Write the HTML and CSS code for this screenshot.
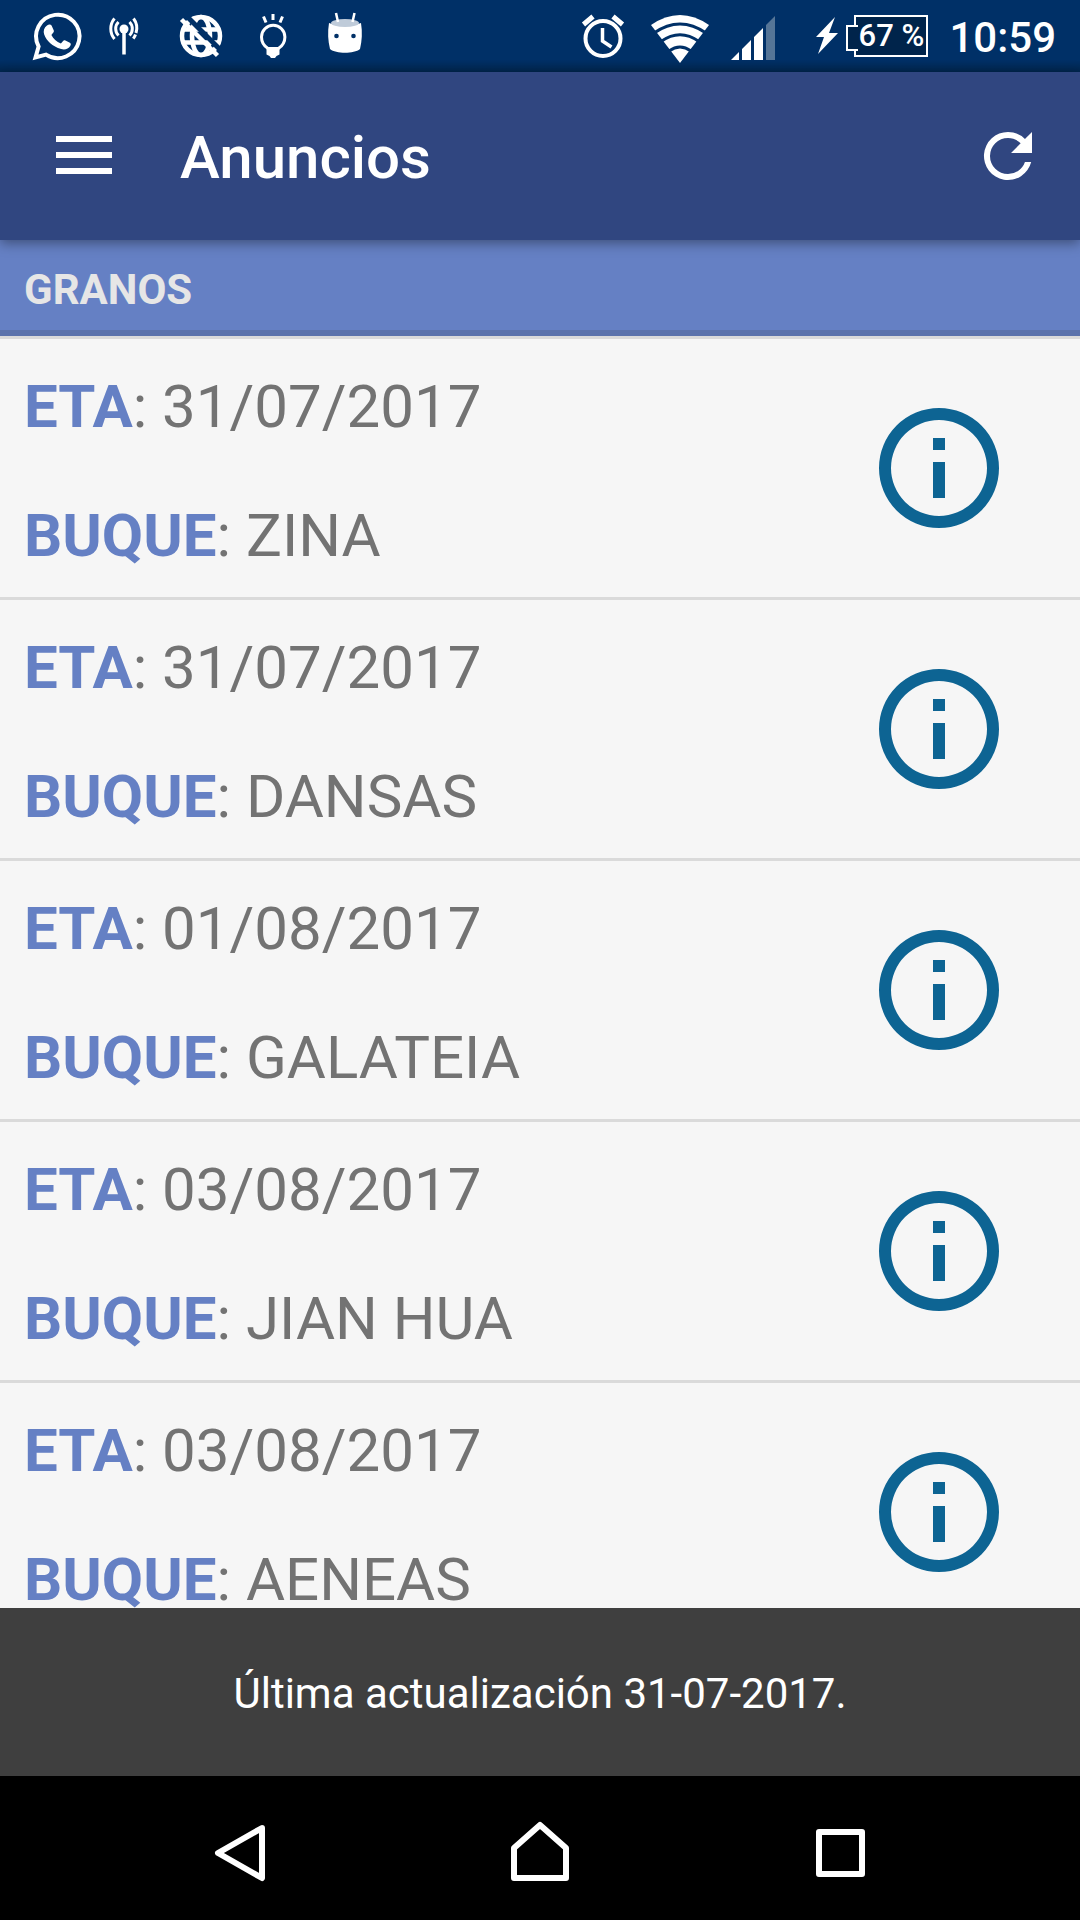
FILE: index.html
```html
<!DOCTYPE html>
<html lang="es">
<head>
<meta charset="utf-8">
<meta name="viewport" content="width=device-width, initial-scale=1">
<title>Anuncios</title>
<link rel="stylesheet" href="styles.css">
</head>
<body>
<div class="screen">
  <div class="status-bar">
    <div class="notifications">
      <svg class="notification" viewBox="0 0 72 72" aria-hidden="true">
        <path d="M14.500 57.500 17.600 46.500A21.700 21.700 0 1 1 25 54.600Z" fill="none" stroke="#fff" stroke-width="4" stroke-linejoin="miter"/>
        <path d="M26 25.500c2-1.500 4-1.200 4.800.5l2 4.600c.4 1.200-.2 2-2.400 4.400 2 4 5 6.800 9.500 8.600 2-2.600 2.700-3.800 4-3.300l5 2.500c1.300.8 1 2 .3 3.300-1.700 3-5.500 4-9 3-9-2.500-14.500-8-17-14.500-1.200-3.500-.2-7 2.800-9.100Z" fill="#fff"/>
      </svg>
      <svg class="notification" viewBox="0 0 72 72" aria-hidden="true">
        <circle cx="31" cy="29" r="4.500" fill="#fff"/>
        <path d="M31 29V54.500" stroke="#fff" stroke-width="3.500"/>
        <path d="M25.500 22a9.500 9.500 0 0 0 0 13.500M36.500 22a9.500 9.500 0 0 1 0 13.500M21.500 18.500a16 16 0 0 0 0 20.500M40.500 18.500a16 16 0 0 1 2.500 14.500M42.500 34.500a16 16 0 0 1-2.200 4.200" fill="none" stroke="#fff" stroke-width="3"/>
      </svg>
      <svg class="notification" viewBox="0 0 72 72" aria-hidden="true">
        <g fill="none" stroke="#fff" stroke-width="4.500">
          <circle cx="36" cy="36" r="19"/>
          <ellipse cx="36" cy="36" rx="9" ry="19"/>
          <path d="M17 29.500H55M17 42.500H55"/>
        </g>
        <path d="M20 14.500 58 52.500" stroke="#003067" stroke-width="5"/>
        <path d="M16.500 19.500 52.500 55.500" stroke="#fff" stroke-width="4.500"/>
      </svg>
      <svg class="notification" viewBox="0 0 72 72" aria-hidden="true">
        <path d="M31 48.500C27 46 24.500 42 24.500 37a11.700 11.700 0 0 1 23.400 0c0 5-2.500 9-6.500 11.500Z" fill="none" stroke="#fff" stroke-width="3"/>
        <path d="M29.500 48h13v6.500l-3 1.500-1.500 2h-4l-1.500-2-3-1.500Z" fill="#fff"/>
        <path d="M36 14v6M26.500 16.500l2.500 6M45.500 16.500l-2.500 6" stroke="#fff" stroke-width="3"/>
      </svg>
      <svg class="notification" viewBox="0 0 72 72" aria-hidden="true">
        <path d="M20 23c10 4 22 4 32 0 1.500 9 1 18-1 26-6 5-24 5-30 0-2-8-2.500-17-1-26Z" fill="#fff"/>
        <ellipse cx="36" cy="23" rx="14" ry="4" fill="#bfcbd9"/>
        <path d="M27 13l2 9M45.500 13l-2 9" stroke="#fff" stroke-width="2.500"/>
        <circle cx="27.500" cy="36" r="2.300" fill="#003067"/>
        <circle cx="44.500" cy="36" r="2.300" fill="#003067"/>
      </svg>
    </div>
    <div class="indicators">
      <svg class="indicator-alarm" viewBox="0 0 44 48" aria-hidden="true">
        <g fill="none" stroke="#fff">
          <circle cx="22" cy="26.500" r="17.500" stroke-width="4"/>
          <path d="M21.500 16v13l9 6" stroke-width="3.500"/>
          <path d="M2.500 12.500 12 4.500M41.500 12.500 32 4.500" stroke-width="5"/>
        </g>
      </svg>
      <svg class="indicator-wifi" viewBox="0 0 58 48" aria-hidden="true">
        <path d="M0 13Q29-7 58 13L29 51Z" fill="#fff"/>
        <path d="M3 21Q29 3 55 21M10 29.500Q29 16 48 29.500M18 39Q29 31 40 39" fill="none" stroke="#003067" stroke-width="3"/>
      </svg>
      <svg class="indicator-signal" viewBox="0 0 44 48" aria-hidden="true">
        <path d="M0 48 8 40V48ZM11 48V37l9-9v20ZM23 48V25l9-9v32Z" fill="#fff"/>
        <path d="M35 48V13l9-9v44Z" fill="#557597"/>
      </svg>
      <svg class="indicator-charge" viewBox="0 0 24 48" aria-hidden="true">
        <path d="M20 5 1 25h8L3 42 23 21H14Z" fill="#fff"/>
      </svg>
      <span class="battery">67 %</span>
      <time class="clock">10:59</time>
    </div>
  </div>

  <header class="app-bar">
    <button class="icon-button" type="button" aria-label="Menú">
      <svg class="menu-icon" viewBox="0 0 56 40" aria-hidden="true"><path d="M0 3H56M0 19H56M0 35H56" stroke="#fff" stroke-width="6"/></svg>
    </button>
    <h1 class="title">Anuncios</h1>
    <button class="icon-button" type="button" aria-label="Actualizar">
      <svg class="refresh-icon" viewBox="0 0 24 24" aria-hidden="true"><path d="M17.650 6.350A7.958 7.958 0 0 0 12 4a8 8 0 1 0 7.730 10h-2.080A5.990 5.990 0 0 1 12 18a6 6 0 1 1 0-12c1.660 0 3.140.69 4.220 1.780L13 11h7V4l-2.350 2.350Z" fill="#fff"/></svg>
    </button>
  </header>

  <main class="content">
    <h2 class="section-title">GRANOS</h2>
    <ul class="list">
      <li class="row">
        <div class="details"><p class="field"><b class="label">ETA</b>: 31/07/2017</p><p class="field"><b class="label">BUQUE</b>: ZINA</p></div>
        <button class="icon-button" type="button" aria-label="Información de ZINA"><svg class="info-icon" viewBox="0 0 24 24" aria-hidden="true"><path d="M11 7h2v2h-2zm0 4h2v6h-2zm1-9a10 10 0 1 0 0 20 10 10 0 0 0 0-20zm0 18a8 8 0 1 1 0-16 8 8 0 0 1 0 16z"/></svg></button>
      </li>
      <li class="row">
        <div class="details"><p class="field"><b class="label">ETA</b>: 31/07/2017</p><p class="field"><b class="label">BUQUE</b>: DANSAS</p></div>
        <button class="icon-button" type="button" aria-label="Información de DANSAS"><svg class="info-icon" viewBox="0 0 24 24" aria-hidden="true"><path d="M11 7h2v2h-2zm0 4h2v6h-2zm1-9a10 10 0 1 0 0 20 10 10 0 0 0 0-20zm0 18a8 8 0 1 1 0-16 8 8 0 0 1 0 16z"/></svg></button>
      </li>
      <li class="row">
        <div class="details"><p class="field"><b class="label">ETA</b>: 01/08/2017</p><p class="field"><b class="label">BUQUE</b>: GALATEIA</p></div>
        <button class="icon-button" type="button" aria-label="Información de GALATEIA"><svg class="info-icon" viewBox="0 0 24 24" aria-hidden="true"><path d="M11 7h2v2h-2zm0 4h2v6h-2zm1-9a10 10 0 1 0 0 20 10 10 0 0 0 0-20zm0 18a8 8 0 1 1 0-16 8 8 0 0 1 0 16z"/></svg></button>
      </li>
      <li class="row">
        <div class="details"><p class="field"><b class="label">ETA</b>: 03/08/2017</p><p class="field"><b class="label">BUQUE</b>: JIAN HUA</p></div>
        <button class="icon-button" type="button" aria-label="Información de JIAN HUA"><svg class="info-icon" viewBox="0 0 24 24" aria-hidden="true"><path d="M11 7h2v2h-2zm0 4h2v6h-2zm1-9a10 10 0 1 0 0 20 10 10 0 0 0 0-20zm0 18a8 8 0 1 1 0-16 8 8 0 0 1 0 16z"/></svg></button>
      </li>
      <li class="row">
        <div class="details"><p class="field"><b class="label">ETA</b>: 03/08/2017</p><p class="field"><b class="label">BUQUE</b>: AENEAS</p></div>
        <button class="icon-button" type="button" aria-label="Información de AENEAS"><svg class="info-icon" viewBox="0 0 24 24" aria-hidden="true"><path d="M11 7h2v2h-2zm0 4h2v6h-2zm1-9a10 10 0 1 0 0 20 10 10 0 0 0 0-20zm0 18a8 8 0 1 1 0-16 8 8 0 0 1 0 16z"/></svg></button>
      </li>
    </ul>
  </main>

  <div class="toast" role="status">Última actualización 31-07-2017.</div>

  <nav class="nav-bar">
    <button class="nav-button" type="button" aria-label="Atrás">
      <svg class="nav-icon" viewBox="0 0 60 60" aria-hidden="true"><path d="M52 5 8 30 52 55Z"/></svg>
    </button>
    <button class="nav-button" type="button" aria-label="Inicio">
      <svg class="nav-icon" viewBox="0 0 60 60" aria-hidden="true"><path d="M4 25 30 2 56 25V55H4Z"/></svg>
    </button>
    <button class="nav-button" type="button" aria-label="Recientes">
      <svg class="nav-icon" viewBox="0 0 60 60" aria-hidden="true"><path d="M9 9H52V51H9Z"/></svg>
    </button>
  </nav>
</div>
</body>
</html>
```
FILE: styles.css
```css
* {
  box-sizing: border-box;
}

body {
  margin: 0;
  font-family: Roboto, "Liberation Sans", sans-serif;
  background: #f6f6f6;
}

h1, h2, p, ul {
  margin: 0;
  padding: 0;
}

svg {
  display: block;
  flex: none;
  overflow: visible;
}

button {
  margin: 0;
  padding: 0;
  border: 0;
  background: none;
  cursor: pointer;
}

.screen {
  display: flex;
  flex-direction: column;
  height: 100vh;
}

/* System status bar */
.status-bar {
  flex: none;
  display: flex;
  justify-content: space-between;
  height: 72px;
  padding: 0 24px 0 21px;
  color: #fff;
  background: linear-gradient(#003067 60px, #00264f);
}

.notifications,
.indicators {
  display: flex;
  align-items: center;
}

.notification {
  width: 72px;
  height: 72px;
}

.indicator-alarm {
  width: 44px;
  height: 48px;
  margin-right: 26px;
}

.indicator-wifi {
  width: 58px;
  height: 48px;
  margin-right: 22px;
}

.indicator-signal {
  width: 44px;
  height: 48px;
  margin-right: 40px;
}

.indicator-charge {
  width: 24px;
  height: 48px;
  margin-right: 15px;
}

.battery {
  position: relative;
  width: 74px;
  height: 42px;
  margin-right: 21px;
  border: 2px solid #fff;
  background: #00244b;
  font-size: 31px;
  font-weight: 500;
  line-height: 38px;
  text-align: center;
  white-space: nowrap;
}

.battery::before {
  content: "";
  position: absolute;
  top: 8px;
  left: -10px;
  width: 10px;
  height: 22px;
  border: 2px solid #fff;
  border-right: 0;
  background: #00244b;
}

.clock {
  padding-top: 3px;
  font-size: 42px;
  font-weight: 500;
  line-height: 48px;
}

/* App bar */
.app-bar {
  position: relative;
  z-index: 1;
  flex: none;
  display: flex;
  align-items: center;
  height: 168px;
  padding: 0 36px 0 56px;
  color: #fff;
  background: #304680;
  box-shadow: 0 3px 12px rgba(0, 0, 0, 0.4);
}

.menu-icon {
  width: 56px;
  height: 40px;
}

.refresh-icon {
  width: 72px;
  height: 72px;
}

.title {
  flex: 1;
  padding: 4px 0 0 68px;
  font-size: 60px;
  font-weight: 500;
  line-height: 72px;
}

/* Announcements */
.content {
  flex: 1;
  min-height: 0;
  overflow: hidden;
}

.section-title {
  padding: 26px 24px 16px;
  border-bottom: 6px solid #5b72ac;
  color: #e6e6e6;
  background: #6580c4;
  font-size: 42px;
  font-weight: 700;
  line-height: 48px;
}

.list {
  list-style: none;
}

.row {
  display: flex;
  align-items: center;
  justify-content: space-between;
  padding: 0 69px 0 24px;
  border-top: 3px solid #dadada;
}

.details {
  display: flex;
  flex-direction: column;
  gap: 57px;
  padding: 32px 0 25px;
}

.field {
  color: #737373;
  font-size: 60px;
  line-height: 72px;
}

.label {
  color: #6580c4;
  font-weight: 700;
}

.info-icon {
  width: 144px;
  height: 144px;
  fill: #0d6493;
}

/* Update message */
.toast {
  flex: none;
  padding: 62px 24px 58px;
  color: #fff;
  background: #3f3f3f;
  font-size: 42px;
  line-height: 48px;
  text-align: center;
}

/* System navigation */
.nav-bar {
  flex: none;
  display: flex;
  height: 144px;
  padding: 10px 90px 0;
  background: #000;
}

.nav-button {
  flex: 1;
  display: flex;
  align-items: center;
  justify-content: center;
}

.nav-icon {
  width: 60px;
  height: 60px;
  fill: none;
  stroke: #fff;
  stroke-width: 6px;
  stroke-linejoin: round;
}
```
